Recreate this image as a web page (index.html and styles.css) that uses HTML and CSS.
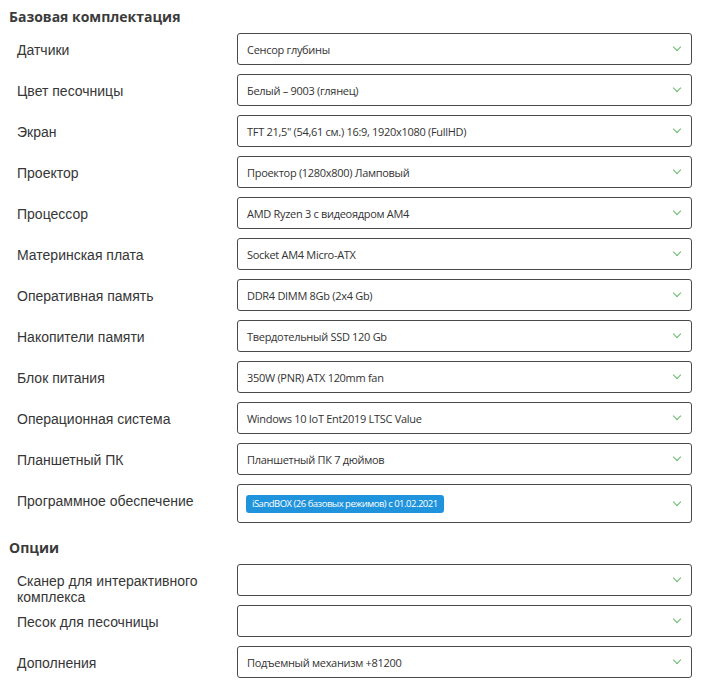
FILE: index.html
```html
<!DOCTYPE html>
<html lang="ru">
<head>
  <meta charset="UTF-8" />
  <title>Комплектация</title>
  <link rel="stylesheet" href="styles.css">
</head>
<body>
  <!-- Базовая комплектация -->
  <h2 class="group-title">Базовая комплектация</h2>
  <div class="rows">
    <div class="row">
      <div class="label">Датчики</div>
      <div class="select"><span class="value">Сенсор глубины</span><span class="chevron"></span></div>
    </div>
    <div class="row">
      <div class="label">Цвет песочницы</div>
      <div class="select"><span class="value">Белый – 9003 (глянец)</span><span class="chevron"></span></div>
    </div>
    <div class="row">
      <div class="label">Экран</div>
      <div class="select"><span class="value">TFT 21,5" (54,61 см.) 16:9, 1920x1080 (FullHD)</span><span class="chevron"></span></div>
    </div>
    <div class="row">
      <div class="label">Проектор</div>
      <div class="select"><span class="value">Проектор (1280x800) Ламповый</span><span class="chevron"></span></div>
    </div>
    <div class="row">
      <div class="label">Процессор</div>
      <div class="select"><span class="value">AMD Ryzen 3 с видеоядром AM4</span><span class="chevron"></span></div>
    </div>
    <div class="row">
      <div class="label">Материнская плата</div>
      <div class="select"><span class="value">Socket AM4 Micro-ATX</span><span class="chevron"></span></div>
    </div>
    <div class="row">
      <div class="label">Оперативная память</div>
      <div class="select"><span class="value">DDR4 DIMM 8Gb (2x4 Gb)</span><span class="chevron"></span></div>
    </div>
    <div class="row">
      <div class="label">Накопители памяти</div>
      <div class="select"><span class="value">Твердотельный SSD 120 Gb</span><span class="chevron"></span></div>
    </div>
    <div class="row">
      <div class="label">Блок питания</div>
      <div class="select"><span class="value">350W (PNR) ATX 120mm fan</span><span class="chevron"></span></div>
    </div>
    <div class="row">
      <div class="label">Операционная система</div>
      <div class="select"><span class="value">Windows 10 IoT Ent2019 LTSC Value</span><span class="chevron"></span></div>
    </div>
    <div class="row">
      <div class="label">Планшетный ПК</div>
      <div class="select"><span class="value">Планшетный ПК 7 дюймов</span><span class="chevron"></span></div>
    </div>
    <div class="row">
      <div class="label">Программное обеспечение</div>
      <div class="select select-multi">
        <span class="value"><span class="chip">iSandBOX (26 базовых режимов) с 01.02.2021</span></span>
        <span class="chevron"></span>
      </div>
    </div>
  </div>

  <!-- Опции -->
  <h2 class="group-title options-title">Опции</h2>
  <div class="rows">
    <div class="row">
      <div class="label">Сканер для интерактивного комплекса</div>
      <div class="select"><span class="value"></span><span class="chevron"></span></div>
    </div>
    <div class="row">
      <div class="label">Песок для песочницы</div>
      <div class="select"><span class="value"></span><span class="chevron"></span></div>
    </div>
    <div class="row">
      <div class="label">Дополнения</div>
      <div class="select"><span class="value">Подъемный механизм +81200</span><span class="chevron"></span></div>
    </div>
  </div>
</body>
</html>
```

FILE: styles.css
```css
/* ======= ОБЩЕЕ ======= */
body {
  margin: 0;
  padding: 0 10px 0 9px;
  background: #fff;
  color: #333;
  font-family: 'Liberation Sans', sans-serif;
  overflow: hidden;
}

/* Заголовки групп */
.group-title {
  margin: 7px 0 6px;
  font-family: 'Open Sans', sans-serif;
  font-size: 14px;
  line-height: 20px;
  font-weight: 700;
  color: #3b3b3b;
}
.options-title {
  margin-top: 15px;
}

/* ======= СТРОКИ ======= */
.rows {
  display: flex;
  flex-direction: column;
  gap: 9px;
}
.row {
  display: grid;
  grid-template-columns: 220px 1fr;
  padding-left: 8px;
}
.label {
  padding: 9px 12px 0 0;
  margin-bottom: -9px; /* длинная подпись не раздвигает строку */
  font-size: 14px;
  line-height: 16px;
  color: #363636;
}

/* ======= СЕЛЕКТЫ ======= */
.select {
  display: flex;
  align-items: center;
  height: 32px;
  box-sizing: border-box;
  border: 1px solid #4a4a4a;
  border-radius: 3px;
  padding: 0 9px 0 9px;
  font-family: 'Open Sans', sans-serif;
  font-size: 11px;
  letter-spacing: -0.3px;
  color: #333;
}
.value {
  flex: 1;
  white-space: nowrap;
}
.chevron {
  width: 5px;
  height: 5px;
  border-right: 1.5px solid #66bb6a;
  border-bottom: 1.5px solid #66bb6a;
  transform: rotate(45deg);
  margin: -4px 2px 0 0;
}

/* Мультиселект с «чипом» */
.select-multi {
  height: 39px;
  padding-left: 8px;
}
.chip {
  display: inline-block;
  background: #1f93dc;
  color: #fff;
  border-radius: 3px;
  padding: 0 6px;
  font-size: 9.5px;
  letter-spacing: -0.5px;
  line-height: 18px;
  margin-top: -3px;
}
```
